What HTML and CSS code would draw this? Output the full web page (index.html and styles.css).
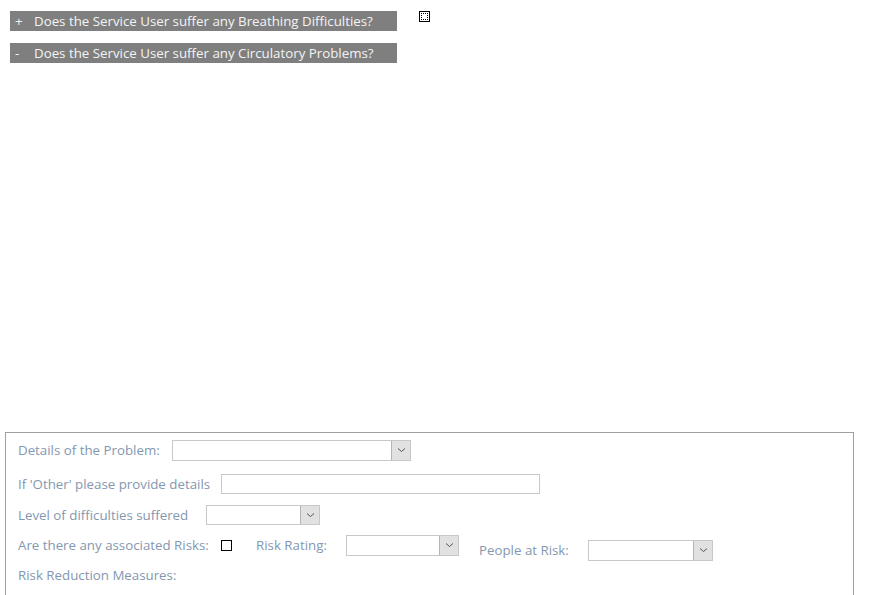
FILE: index.html
```html
<!DOCTYPE html>
<html>
<head>
<meta charset="utf-8">
<link rel="stylesheet" href="styles.css">
</head>
<body>
<div class="top">
  <div class="bar-row">
    <div class="bar"><span class="sign">+</span><span class="bar-text">Does the Service User suffer any Breathing Difficulties?</span></div>
    <span class="focus-box"></span>
  </div>
  <div class="bar-row second">
    <div class="bar"><span class="sign">-</span><span class="bar-text">Does the Service User suffer any Circulatory Problems?</span></div>
  </div>
</div>

<div class="panel">
  <div class="row r1">
    <span class="label w1">Details of the Problem:</span>
    <div class="combo c1"><span class="drop"><svg width="9" height="6" viewBox="0 0 9 6"><path d="M1 1.5 L4.5 4.5 L8 1.5" fill="none" stroke="#555" stroke-width="1"/></svg></span></div>
  </div>
  <div class="row r2">
    <span class="label w2">If 'Other' please provide details</span>
    <div class="textbox"></div>
  </div>
  <div class="row r3">
    <span class="label w3">Level of difficulties suffered</span>
    <div class="combo c3"><span class="drop"><svg width="9" height="6" viewBox="0 0 9 6"><path d="M1 1.5 L4.5 4.5 L8 1.5" fill="none" stroke="#555" stroke-width="1"/></svg></span></div>
  </div>
  <div class="row r4">
    <span class="label w4">Are there any associated Risks:</span>
    <span class="check"></span>
    <span class="label w5">Risk Rating:</span>
    <div class="combo c4"><span class="drop"><svg width="9" height="6" viewBox="0 0 9 6"><path d="M1 1.5 L4.5 4.5 L8 1.5" fill="none" stroke="#555" stroke-width="1"/></svg></span></div>
    <div class="people">
      <span class="label w6">People at Risk:</span>
      <div class="combo c5"><span class="drop"><svg width="9" height="6" viewBox="0 0 9 6"><path d="M1 1.5 L4.5 4.5 L8 1.5" fill="none" stroke="#555" stroke-width="1"/></svg></span></div>
    </div>
  </div>
  <div class="row r5">
    <span class="label">Risk Reduction Measures:</span>
  </div>
</div>
</body>
</html>
```

FILE: styles.css
```css
html, body {
  margin: 0;
  padding: 0;
  background: #ffffff;
  font-family: "Open Sans", "Noto Sans", sans-serif;
  font-size: 13.3px;
  overflow: hidden;
}

.top {
  padding: 11px 0 0 10px;
}

.bar-row {
  display: flex;
  align-items: flex-start;
  height: 20px;
}

.bar-row.second {
  margin-top: 12px;
}

.bar {
  width: 387px;
  height: 20px;
  background: #7f7f7f;
  color: #f4f4f4;
  display: flex;
  align-items: center;
  white-space: nowrap;
}

.sign {
  width: 24px;
  padding-left: 5px;
  box-sizing: border-box;
}

.focus-box {
  width: 9px;
  height: 9px;
  margin-left: 22px;
  border: 1px solid #000;
  outline: 1px dotted #000;
  outline-offset: -3px;
  box-sizing: content-box;
}

.panel {
  margin: 369px 0 0 5px;
  width: 849px;
  height: 163px;
  border: 1px solid #a0a0a0;
  border-bottom: none;
  padding-left: 12px;
  box-sizing: border-box;
}

.row {
  display: flex;
  align-items: center;
  white-space: nowrap;
}

.r1 { height: 34px; }
.r2 { height: 34px; }
.r3 { height: 28px; }
.r4 { height: 32px; }
.r5 { height: 28px; }

.label {
  color: #8497b0;
}

.w1 { width: 154px; }
.w2 { width: 203px; }
.w3 { width: 188px; }
.w4 { width: 203px; }
.w5 { width: 90px; margin-left: 24px; }
.w6 { width: 109px; }

.combo {
  height: 21px;
  border: 1px solid #c8c8c8;
  background: #fff;
  box-sizing: border-box;
  display: flex;
  justify-content: flex-end;
  align-items: stretch;
}

.drop {
  width: 18px;
  background: #e1e1e1;
  border-left: 1px solid #b4b4b4;
  display: flex;
  align-items: center;
  justify-content: center;
}

.c1 { width: 239px; }
.c3 { width: 114px; height: 20px; }
.c4 { width: 113px; }
.c5 { width: 125px; }

.textbox {
  width: 319px;
  height: 20px;
  border: 1px solid #c8c8c8;
  box-sizing: border-box;
}

.check {
  width: 11px;
  height: 11px;
  border: 1px solid #000;
  box-sizing: border-box;
}

.people {
  display: flex;
  align-items: center;
  margin-left: 20px;
  margin-top: 10px;
}
```
